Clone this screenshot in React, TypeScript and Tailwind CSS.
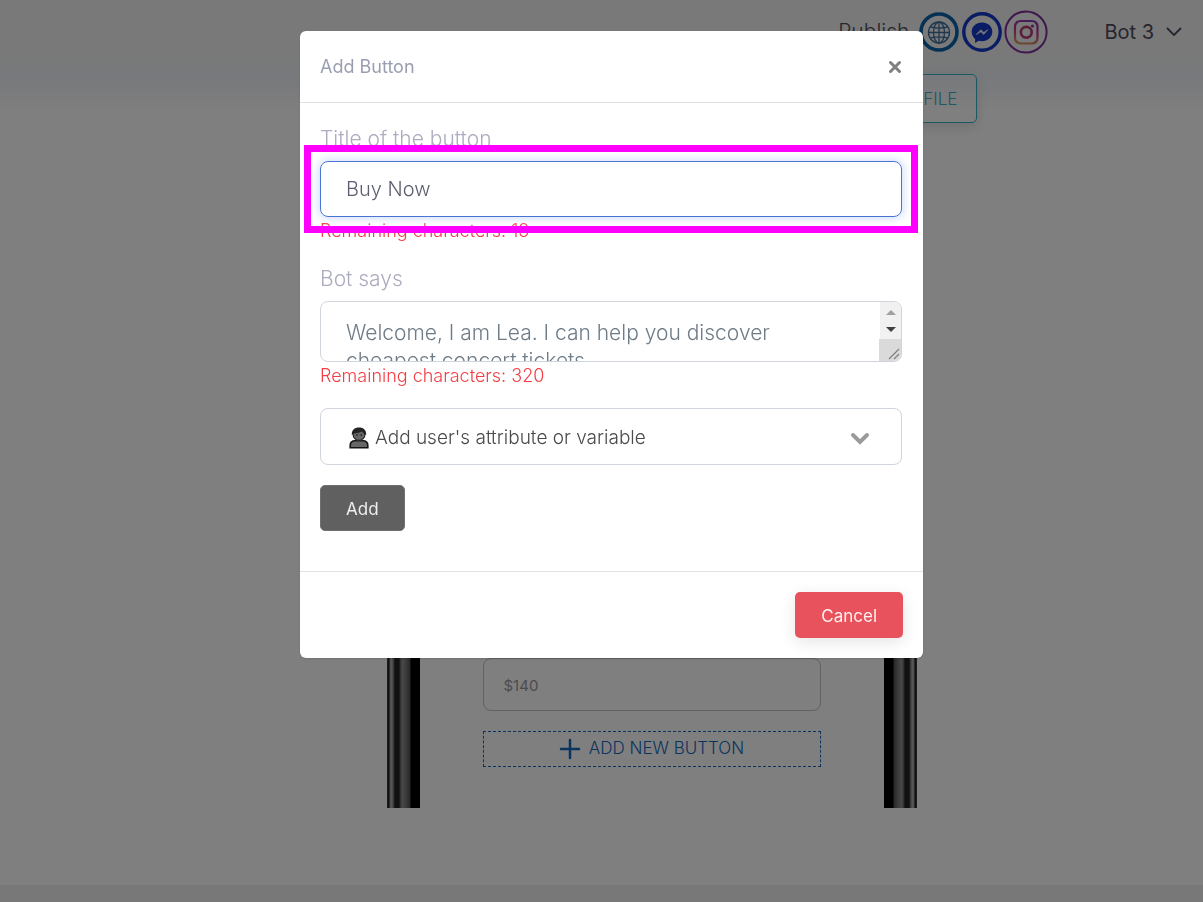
import { useState } from "react";

function GlobeIcon() {
  return (
    <svg viewBox="0 0 40 40" className="size-10" fill="none" aria-hidden="true">
      <circle cx="20" cy="20" r="18" fill="#f4f4f4" stroke="#0a64a8" strokeWidth="3.600" />
      <g stroke="#3f6f9c" strokeWidth="1.300">
        <circle cx="20" cy="20.500" r="10.500" />
        <ellipse cx="20" cy="20.500" rx="5.500" ry="10.500" />
        <path d="M20 10v21M9.500 20.500h21M11.500 15c5 1.300 12 1.300 17 0M11.500 26c5-1.300 12-1.300 17 0" />
      </g>
    </svg>
  );
}

function MessengerIcon() {
  return (
    <svg viewBox="0 0 40 40" className="size-10" fill="none" aria-hidden="true">
      <circle cx="20" cy="20" r="18.200" fill="#f4f4f4" stroke="#1238c8" strokeWidth="3.400" />
      <path
        d="M20 10.500c-5.900 0-10.300 4-10.300 9.300 0 2.900 1.300 5.400 3.400 7.100v4l3.500-2.100c1.100.3 2.200.4 3.400.4 5.900 0 10.300-4 10.300-9.400s-4.400-9.300-10.300-9.300z"
        fill="#1238c8"
      />
      <path d="m14.300 22.500 4.500-4.700 3 2.600 4-2.700-4 4.700-3-2.600z" fill="#f4f4f4" stroke="#f4f4f4" strokeWidth="0.700" strokeLinejoin="round" />
    </svg>
  );
}

function InstagramIcon() {
  return (
    <svg viewBox="0 0 44 44" className="size-11" fill="none" aria-hidden="true">
      <defs>
        <linearGradient id="insta" x1="0.600" y1="0" x2="0.400" y2="1">
          <stop offset="0" stopColor="#8a38b4" />
          <stop offset="0.500" stopColor="#c03a80" />
          <stop offset="1" stopColor="#d8905c" />
        </linearGradient>
      </defs>
      <circle cx="22" cy="22" r="20.600" fill="#f4f4f4" stroke="#7c309c" strokeWidth="2" />
      <rect x="11" y="11" width="22.500" height="22.500" rx="5.500" stroke="url(#insta)" strokeWidth="2.200" />
      <circle cx="22.300" cy="22.300" r="5.400" stroke="#b83a78" strokeWidth="2.600" />
      <circle cx="28.500" cy="16" r="1.600" fill="#9038a4" />
    </svg>
  );
}

function PersonIcon() {
  return (
    <svg viewBox="0 0 20 22" className="size-full" aria-hidden="true">
      <path d="M1.200 20.800v-2.400c0-3.200 2.300-4.700 5-4.700h7.600c2.700 0 5 1.500 5 4.700v2.400z" fill="#666" stroke="#151515" strokeWidth="1.600" />
      <path d="M7.500 11h5v3.500h-5z" fill="#444" />
      <circle cx="10" cy="7.500" r="5.900" fill="#666" stroke="#222" strokeWidth="1.200" />
      <path d="M2.800 8C2.500 3.200 5.500.6 10 .6s7.500 2.600 7.200 7.400C15.500 7.200 14 6 13 4.500 10 6.200 5 5.800 2.800 8z" fill="#222" />
      <circle cx="7.900" cy="8" r=".8" fill="#111" />
      <circle cx="12.200" cy="8" r=".8" fill="#111" />
    </svg>
  );
}

function Header() {
  return (
    <header className="flex h-16 items-center justify-end pr-[21px]">
      <span className="mr-2.5 text-[21px] font-light text-[#4c4c5c]">Publish</span>
      <div className="flex items-center gap-[3px]">
        <button type="button" aria-label="Website"><GlobeIcon /></button>
        <button type="button" aria-label="Messenger"><MessengerIcon /></button>
        <button type="button" aria-label="Instagram" className="-ml-px"><InstagramIcon /></button>
      </div>
      <button type="button" className="ml-14 flex items-center gap-3 text-[20px] text-[#4c4c5c]">
        Bot 3
        <svg viewBox="0 0 16 10" className="h-[10px] w-4" fill="none" stroke="currentColor" strokeWidth="1.800" strokeLinecap="round" strokeLinejoin="round" aria-hidden="true">
          <path d="m1.500 1.500 6.500 6.500 6.500-6.500" />
        </svg>
      </button>
    </header>
  );
}

function Phone() {
  return (
    <div className="mx-auto flex h-[665px] w-full max-w-[530px] justify-between">
      <div className="w-[33px] bg-[linear-gradient(90deg,#555_0,#222_1px_2px,#888_3px,#b8b8b8_4px,#888_6px,#222_8px_12px,#555_13px,#909090_15px,#808080_18px,#505050_23px,#000_24px_100%)]" />
      <div className="flex w-[338px] flex-col justify-end gap-5 pb-[41px]">
        <input
          aria-label="Price"
          defaultValue="$140"
          className="h-[53px] w-full rounded-lg border border-[#c4c4cc] bg-transparent px-5 pt-0.5 text-[15px] text-[#999]"
        />
        <button type="button" className="flex h-9 items-center justify-center gap-2 border border-dashed border-[#1468bc] text-[17px] font-light text-[#1468bc]">
          <svg viewBox="0 0 22 22" className="size-[22px]" stroke="currentColor" strokeWidth="2.500" strokeLinecap="round" aria-hidden="true">
            <path d="M11 2v18M2 11h18" />
          </svg>
          ADD NEW BUTTON
        </button>
      </div>
      <div className="w-[33px] bg-[linear-gradient(270deg,#555_0,#222_1px_2px,#888_3px,#b8b8b8_4px,#888_6px,#222_8px_12px,#555_13px,#909090_15px,#808080_18px,#505050_23px,#000_24px_100%)]" />
    </div>
  );
}

function AddButtonDialog() {
  const [title, setTitle] = useState("Buy Now");
  const [message, setMessage] = useState(
    "Welcome, I am Lea. I can help you discover\ncheapest concert tickets."
  );

  return (
    <div role="dialog" aria-modal="true" aria-labelledby="dialog-title" className="w-full max-w-[623px] rounded-md bg-white shadow-sm">
      <div className="flex h-[72px] items-center justify-between border-b border-[#e2e2e6] px-5">
        <h1 id="dialog-title" className="text-[18px] text-[#9a9eb2]">Add Button</h1>
        <button type="button" aria-label="Close" className="p-px text-[#808080]">
          <svg viewBox="0 0 14 14" className="size-[14px]" stroke="currentColor" strokeWidth="3" strokeLinecap="round" aria-hidden="true">
            <path d="m2.500 2.500 9 9M11.500 2.500l-9 9" />
          </svg>
        </button>
      </div>

      <div className="pt-[22px] pr-[21px] pb-10 pl-5">
        <label htmlFor="title" className="mb-2 block text-[21px] leading-7 font-light text-[#acacc0]">Title of the button</label>
        <div className="relative">
          <input
            id="title"
            value={title}
            onChange={(e) => setTitle(e.target.value)}
            className="block h-14 w-full rounded-lg border border-[#4a74d4] px-[25px] text-[20px] font-light text-[#5c5e70] shadow-[0_0_8px_2px_#d4e0fc] outline-none"
          />
          <div className="pointer-events-none absolute -inset-4 z-10 border-[7px] border-[#ff00ff]" />
        </div>
        <p className="text-[18px] leading-7 font-light text-[#f43c44]">Remaining characters: 13</p>

        <label htmlFor="message" className="mt-5 mb-2 block text-[21px] leading-7 font-light text-[#acacc0]">Bot says</label>
        <div className="flex h-[61px] overflow-hidden rounded-lg border border-[#d0d4dc]">
          <textarea
            id="message"
            value={message}
            onChange={(e) => setMessage(e.target.value)}
            className="h-full min-w-0 flex-1 resize-none overflow-hidden pt-[17px] pl-[25px] text-[21px] leading-7 font-light text-[#6e7c88] outline-none"
          />
          <svg viewBox="0 0 22 59" className="h-full w-[22px]" aria-hidden="true">
            <path d="M1 0h21v38H1z" fill="#f1f1f1" />
            <path d="M0 37h22v22H0z" fill="#dadada" />
            <path d="m7 13 5-5 5 5z" fill="#a0a0a0" />
            <path d="m7 25 5 5 5-5z" fill="#404040" />
            <path d="m10 57 10-10M15 57l5-5" stroke="#808080" strokeWidth="1.200" />
          </svg>
        </div>
        <p className="text-[18px] leading-7 font-light text-[#f43c44]">Remaining characters: 320</p>

        <div className="relative mt-[18px]">
          <select
            aria-label="Add user's attribute or variable"
            className="block h-[57px] w-full appearance-none rounded-lg border border-[#d0d4dc] bg-white pt-1 pr-16 pl-[54px] text-[19px] font-light text-[#4a4a4a]"
          >
            <option>Add user's attribute or variable</option>
          </select>
          <span className="pointer-events-none absolute inset-y-0 left-[29px] flex items-center pt-0.5">
            <span className="h-[22px] w-5"><PersonIcon /></span>
          </span>
          <span className="pointer-events-none absolute inset-y-0 right-8 flex items-center pt-1">
            <svg viewBox="0 0 20 14" className="h-[14px] w-5" fill="none" stroke="#9a9a9a" strokeWidth="4" strokeLinecap="round" aria-hidden="true">
              <path d="m3 3 7 7 7-7" />
            </svg>
          </span>
        </div>

        <button type="button" className="mt-5 block h-[46px] rounded-[5px] border border-[#707070] bg-[#606060] px-[25px] pt-1 text-[17px] text-[#eee]">
          Add
        </button>
      </div>

      <div className="flex justify-end border-t border-[#e2e2e6] p-5">
        <button type="button" className="h-[46px] rounded-[5px] bg-[#e8525c] px-[26px] pt-1 text-[17px] text-[#fff0f0] shadow-[0_4px_16px_#0000001c]">
          Cancel
        </button>
      </div>
    </div>
  );
}

export default function App() {
  return (
    <div className="flex min-h-screen flex-col bg-[linear-gradient(180deg,#f2f2f2_0,#f2f2f2_56px,#eef2f8_76px,#f6f7fb_92px,#fff_112px)] font-[Inter,sans-serif]">
      <Header />
      <main className="pt-[10px] pl-[100px]">
        <div className="mx-auto mb-5 flex max-w-[650px] justify-end">
          <button type="button" className="h-[49px] w-[150px] rounded-[5px] border border-[#3cb0c4] pt-0.5 pr-[18px] text-right text-[17px] font-light text-[#3cb0c4] shadow-[0_4px_12px_#00000020]">
            FILE
          </button>
        </div>
        <Phone />
      </main>
      <footer className="mt-auto h-[17px] bg-[#f0f0f0]" />
      <div className="fixed inset-0 z-20 flex items-start justify-center overflow-hidden bg-black/50 pt-[31px] pl-5">
        <AddButtonDialog />
      </div>
    </div>
  );
}
